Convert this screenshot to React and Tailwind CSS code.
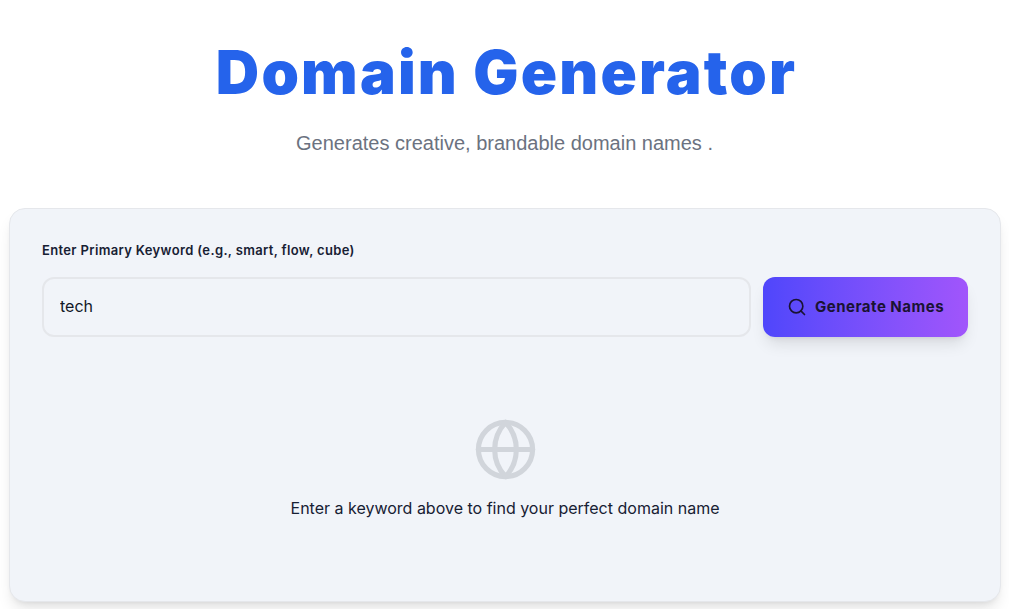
import { Search, Globe } from "lucide-react";

export default function App() {
  return (
    <div className="min-h-[609px] overflow-hidden bg-white font-['Inter',sans-serif] text-[#111827]">
      <header className="flex h-[208px] flex-col items-center pt-[36px]">
        <h1 className="pl-[4px] text-[60px] leading-[72px] font-black tracking-[2.2px] text-[#2563eb]">
          Domain Generator
        </h1>
        <p className="mt-[21px] font-['Liberation_Sans',sans-serif] text-[20px] leading-[28px] text-[#6b7280]">
          Generates creative, brandable domain names .
        </p>
      </header>

      <main className="ml-[9px] mr-[8px] h-[394px] rounded-[16px] border border-[#e5e7eb] bg-[#f1f4f9] px-[32px] pt-[32px] shadow-[0_10px_15px_-3px_rgba(0,0,0,0.1),0_4px_6px_-4px_rgba(0,0,0,0.1)]">
        <label className="block text-[13px] leading-[18px] font-semibold tracking-[0.35px] text-[#172033]">
          Enter Primary Keyword (e.g., smart, flow, cube)
        </label>

        <div className="mt-[18px] flex gap-[12px]">
          <input
            readOnly
            value="tech"
            className="h-[60px] min-w-0 flex-1 rounded-[12px] border-2 border-[#e5e7eb] bg-[#f1f4f9] px-[16px] pb-[2px] text-[16px] text-[#111827] outline-none"
          />
          <button
            type="button"
            className="flex h-[60px] w-[205px] items-center justify-center gap-[8px] rounded-[12px] bg-gradient-to-r from-[#4f46fb] to-[#a155fb] text-[15px] font-bold tracking-[0.5px] text-[#1a1333] shadow-[0_10px_15px_-3px_rgba(0,0,0,0.1),0_4px_6px_-4px_rgba(0,0,0,0.1)]"
          >
            <Search size={20} strokeWidth={2} />
            Generate Names
          </button>
        </div>

        <div className="mt-[80px] flex flex-col items-center">
          <Globe size={65} strokeWidth={1.9} className="text-[#d1d5db]" />
          <p className="mt-[14px] text-[16px] leading-[24px] text-[#172033]">
            Enter a keyword above to find your perfect domain name
          </p>
        </div>
      </main>
    </div>
  );
}
